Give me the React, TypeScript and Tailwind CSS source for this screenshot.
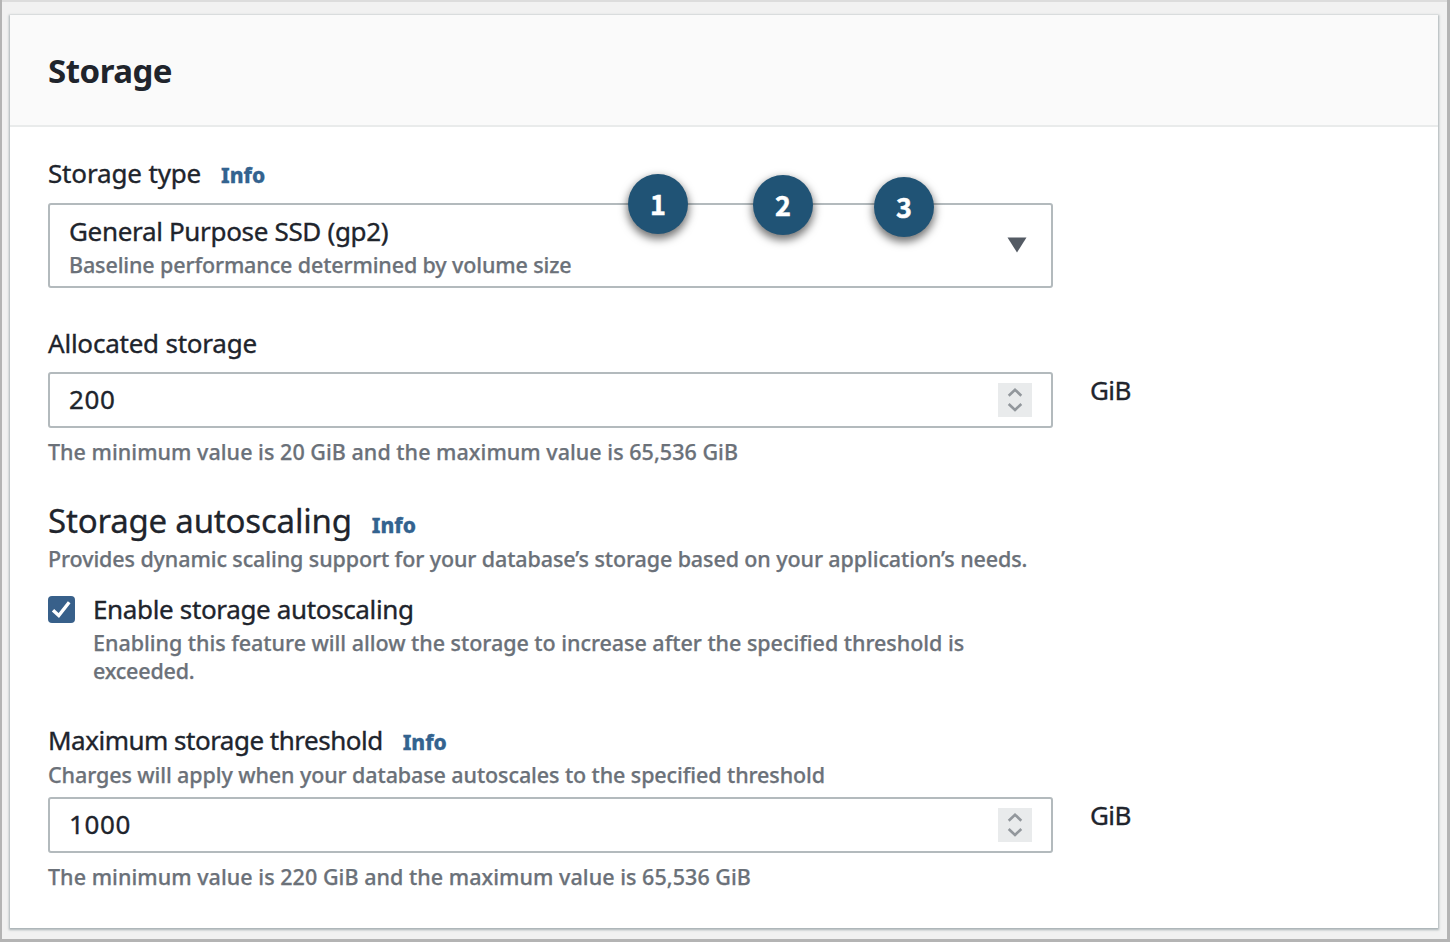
import React from "react";

function Info() {
  return (
    <a className="ml-[20px] mt-[2px] text-[21px] leading-[32px] font-extrabold text-[#33638f] [-webkit-text-stroke:0.3px]">
      Info
    </a>
  );
}

function Hint({ className = "", children }: { className?: string; children: React.ReactNode }) {
  return (
    <p
      className={`text-[21.5px] leading-[28px] font-medium text-[#6b7179] whitespace-nowrap [-webkit-text-stroke:0.25px] ${className}`}
    >
      {children}
    </p>
  );
}

function Badge({ n, className }: { n: number; className: string }) {
  return (
    <div
      className={`absolute flex size-[60px] items-center justify-center rounded-full bg-[#205375] shadow-[0_4px_8px_1px_rgba(0,0,0,0.55)] font-['Noto_Sans_CJK_SC','Noto_Sans',sans-serif] text-[27px] leading-[60px] font-bold text-white [-webkit-text-stroke:0.5px] ${className}`}
    >
      <span className="-mt-[1px]">{n}</span>
    </div>
  );
}

function NumberField({ value }: { value: string }) {
  return (
    <div className="flex [-webkit-text-stroke:0.35px]">
      <div className="flex h-[56px] w-[1005px] items-center justify-between rounded-[3px] border-2 border-[#b3babd] bg-white pl-[19px] pr-[19px]">
        <span className="-mt-[2px] text-[26px] leading-[32px] tracking-[0.6px]">{value}</span>
        <span className="flex size-[34px] items-center justify-center bg-[#e9ebec]">
          <svg width="34" height="34" viewBox="0 0 34 34" fill="none" stroke="#92979c" strokeWidth="2.6">
            <path d="M10.7 12.7 17 6.7l6.3 6" />
            <path d="M10.7 21 17 27l6.3-6" />
          </svg>
        </span>
      </div>
      <span className="ml-[37px] mt-[2px] text-[26px] leading-[32px] tracking-[-0.6px]">GiB</span>
    </div>
  );
}

export default function App() {
  return (
    <div className="h-[942px] w-[1450px] overflow-hidden bg-[#b4b4b4] pb-[3px] pl-[2px] pr-[3px] font-['Noto_Sans',sans-serif] text-[#20242c]">
      <div className="h-[939px] border-t-2 border-[#dcdcdc] bg-[#f1f1f1] pl-[8px] pr-[9px] pt-[13px]">
        <section className="h-[913px] bg-white shadow-[0_1px_2px_1px_rgba(120,135,140,0.6)]">
          <header className="flex h-[112px] items-center border-b-2 border-[#e9ebeb] bg-[#fafafa] px-[38px] pt-[2px]">
            <h1 className="text-[33px] leading-[44px] font-bold tracking-[-0.5px]">Storage</h1>
          </header>

          <div className="px-[38px] pt-[30px]">
            <div className="flex">
              <label className="text-[26px] leading-[32px] tracking-[-0.15px] [-webkit-text-stroke:0.35px]">Storage type</label>
              <Info />
            </div>
            <div className="relative mt-[12px] flex h-[85px] w-[1005px] items-center justify-between rounded-[3px] border-2 border-[#b3babd] pl-[19px] pr-[24px]">
              <div className="pt-[3px]">
                <div className="text-[26px] leading-[32px] tracking-[-0.33px] [-webkit-text-stroke:0.35px]">General Purpose SSD (gp2)</div>
                <Hint className="mt-[4px] tracking-[-0.13px]">Baseline performance determined by volume size</Hint>
              </div>
              <svg className="-mt-[2px]" width="20" height="16" viewBox="0 0 20 16">
                <path d="M.5.5h19L10 15.5z" fill="#545b64" />
              </svg>
              <Badge n={1} className="left-[578px] top-[-31px]" />
              <Badge n={2} className="left-[703px] top-[-30px]" />
              <Badge n={3} className="left-[824px] top-[-28px]" />
            </div>

            <label className="mt-[39px] block text-[26px] leading-[32px] tracking-[-0.22px] [-webkit-text-stroke:0.35px]">
              Allocated storage
            </label>
            <div className="mt-[13px]">
              <NumberField value="200" />
            </div>
            <Hint className="mt-[10px] tracking-[0.03px]">The minimum value is 20 GiB and the maximum value is 65,536 GiB</Hint>

            <div className="mt-[35px] flex">
              <h2 className="text-[33px] leading-[40px] tracking-[-0.2px] [-webkit-text-stroke:0.3px]">Storage autoscaling</h2>
              <div className="flex pt-[6px]">
                <Info />
              </div>
            </div>
            <Hint className="mt-[4px] tracking-[-0.105px]">
              Provides dynamic scaling support for your database’s storage based on your application’s needs.
            </Hint>

            <div className="mt-[20px] flex">
              <span className="mt-[3px] flex size-[27px] items-center justify-center rounded-[4px] bg-[#38608a]">
                <svg width="27" height="27" viewBox="0 0 27 27" fill="none" stroke="#fff" strokeWidth="3.4">
                  <path d="M5 14.2l5.8 5.3L21.2 6.3" />
                </svg>
              </span>
              <div className="ml-[18px]">
                <div className="text-[26px] leading-[32px] tracking-[-0.35px] [-webkit-text-stroke:0.35px]">
                  Enable storage autoscaling
                </div>
                <Hint className="mt-[4px] tracking-[-0.035px]">
                  Enabling this feature will allow the storage to increase after the specified threshold is
                </Hint>
                <Hint className="tracking-[-0.2px]">exceeded.</Hint>
              </div>
            </div>

            <div className="mt-[39px] flex">
              <label className="text-[26px] leading-[32px] tracking-[-0.5px] [-webkit-text-stroke:0.35px]">
                Maximum storage threshold
              </label>
              <Info />
            </div>
            <Hint className="mt-[3px] tracking-[-0.1px]">
              Charges will apply when your database autoscales to the specified threshold
            </Hint>
            <div className="mt-[8px]">
              <NumberField value="1000" />
            </div>
            <Hint className="mt-[10px] tracking-[0.04px]">The minimum value is 220 GiB and the maximum value is 65,536 GiB</Hint>
          </div>
        </section>
      </div>
    </div>
  );
}
